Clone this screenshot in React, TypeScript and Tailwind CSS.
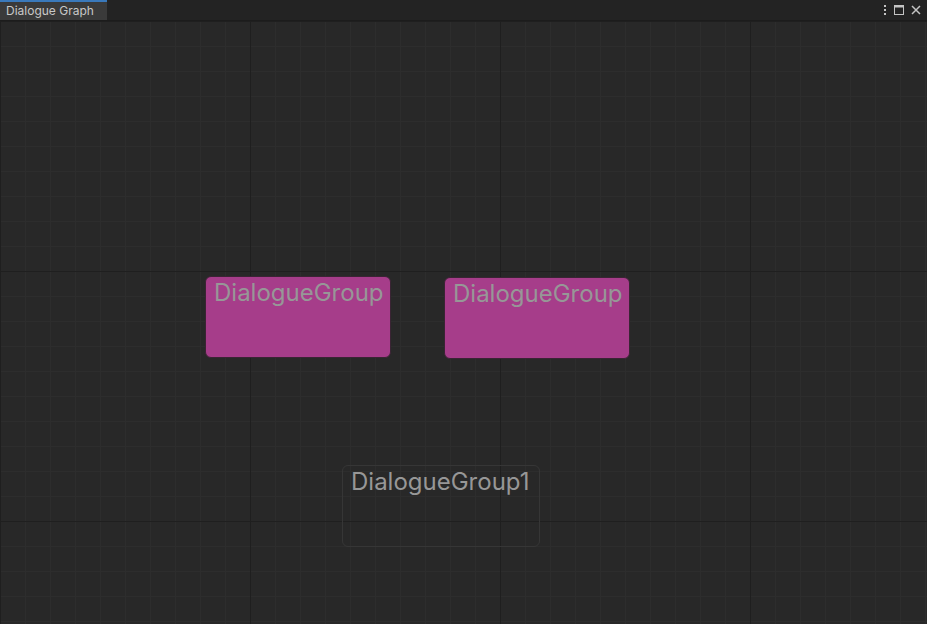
import React from "react";

type Group = { title: string; x: number; y: number; w: number; h: number; filled: boolean };

const groups: Group[] = [
  { title: "DialogueGroup", x: 205, y: 255, w: 186, h: 82, filled: true },
  { title: "DialogueGroup", x: 444, y: 256, w: 186, h: 82, filled: true },
  { title: "DialogueGroup1", x: 342, y: 444, w: 198, h: 82, filled: false },
];

const GridBackground: React.FC = () => (
  <svg className="absolute inset-0 w-full h-full" xmlns="http://www.w3.org/2000/svg">
    <defs>
      <pattern id="minor" width="25" height="25" patternUnits="userSpaceOnUse">
        <path d="M0 0.5H25M0.5 0V25" stroke="#2d2d2d" strokeWidth="1" fill="none" />
      </pattern>
      <pattern id="major" width="250" height="250" patternUnits="userSpaceOnUse">
        <rect width="250" height="250" fill="url(#minor)" />
        <path d="M0 0.5H250M0.5 0V250" stroke="#1f1f1f" strokeWidth="1" fill="none" />
      </pattern>
    </defs>
    <rect width="100%" height="100%" fill="url(#major)" />
  </svg>
);

const GroupNode: React.FC<{ g: Group }> = ({ g }) => (
  <div
    className={
      g.filled
        ? "absolute rounded-[6px] border border-[#3a2434] bg-[#a63d8a]"
        : "absolute rounded-[6px] border border-[#363636] bg-transparent"
    }
    style={{ left: g.x, top: g.y, width: g.w, height: g.h }}
  >
    <div className="pl-[8px] pt-[1px] text-[24px] leading-[30px] text-[#979797] whitespace-nowrap">
      {g.title}
    </div>
  </div>
);

export default function App() {
  return (
    <div className="w-[927px] h-[624px] flex flex-col bg-[#282828] overflow-hidden font-['Inter','Noto_Sans',sans-serif]">
      <div className="h-[21px] flex items-stretch bg-[#232323] border-b border-[#1c1c1c] shrink-0">
        <div className="w-[107px] bg-[#3a3a3a] border-t-2 border-[#3a79bb] flex items-center pl-[6px] text-[12px] text-[#c8c8c8]">
          Dialogue Graph
        </div>
        <div className="flex-1" />
        <div className="flex items-center gap-[7px] pr-[6px] text-[#c4c4c4]">
          <svg width="4" height="12" viewBox="0 0 4 12">
            <rect x="1" y="1" width="2" height="2" fill="currentColor" />
            <rect x="1" y="5" width="2" height="2" fill="currentColor" />
            <rect x="1" y="9" width="2" height="2" fill="currentColor" />
          </svg>
          <svg width="10" height="10" viewBox="0 0 10 10">
            <rect x="0.5" y="0.5" width="9" height="9" fill="none" stroke="currentColor" />
            <rect x="0.5" y="0.5" width="9" height="2" fill="currentColor" />
          </svg>
          <svg width="10" height="10" viewBox="0 0 10 10">
            <path d="M1 1L9 9M9 1L1 9" stroke="currentColor" strokeWidth="1.5" />
          </svg>
        </div>
      </div>
      <div className="relative flex-1 rounded-bl-[4px]">
        <GridBackground />
        {groups.map((g, i) => (
          <GroupNode key={i} g={g} />
        ))}
      </div>
    </div>
  );
}
